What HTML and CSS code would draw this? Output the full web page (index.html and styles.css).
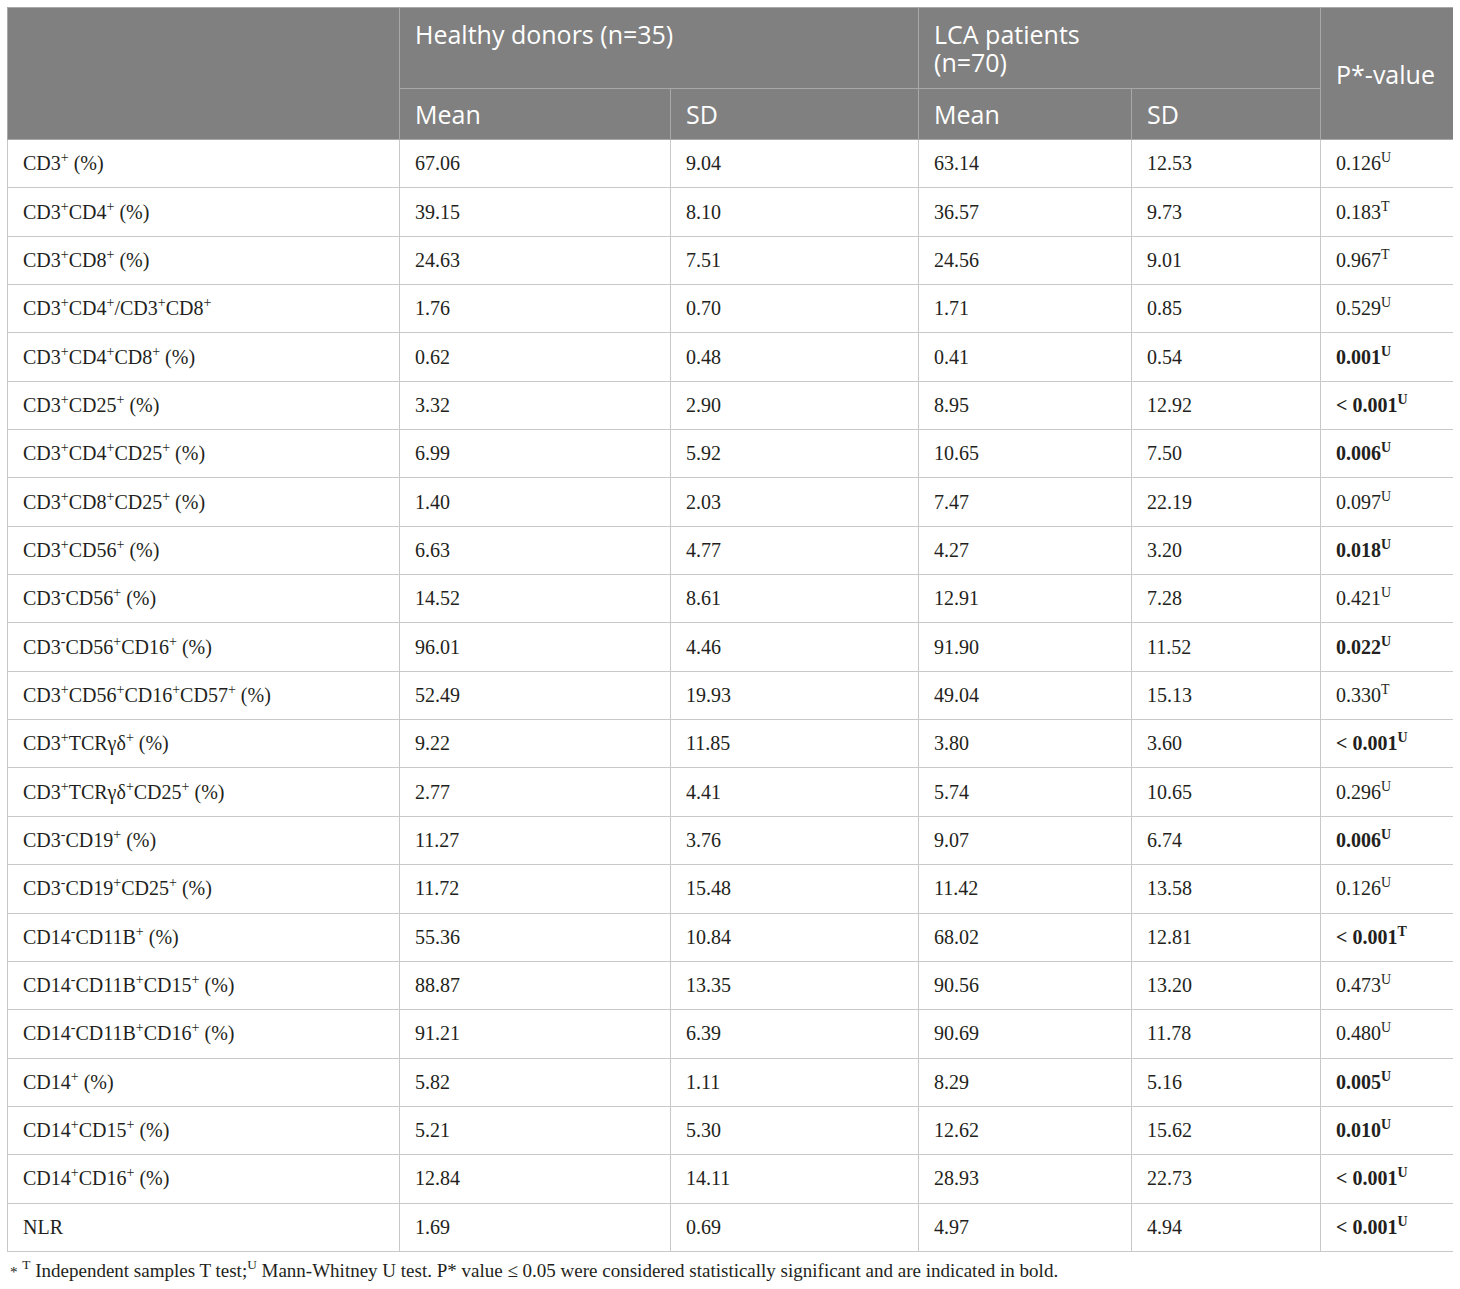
FILE: index.html
```html
<!DOCTYPE html>
<html lang="en">
<head>
  <meta charset="UTF-8" />
  <title>Immune cell subsets: healthy donors vs LCA patients</title>
  <link rel="stylesheet" href="styles.css">
</head>
<body>
  <table class="data-table">
    <colgroup>
      <col class="col-marker">
      <col class="col-hd-mean">
      <col class="col-hd-sd">
      <col class="col-lca-mean">
      <col class="col-lca-sd">
      <col class="col-p">
    </colgroup>
    <thead>
      <tr class="head-top">
        <th rowspan="2"></th>
        <th colspan="2">Healthy donors (n=35)</th>
        <th colspan="2">LCA patients<br>(n=70)</th>
        <th rowspan="2" class="p-head">P*-value</th>
      </tr>
      <tr class="head-sub">
        <th>Mean</th>
        <th>SD</th>
        <th>Mean</th>
        <th>SD</th>
      </tr>
    </thead>
    <tbody>
      <tr><td>CD3<sup>+</sup> (%)</td><td>67.06</td><td>9.04</td><td>63.14</td><td>12.53</td><td>0.126<sup>U</sup></td></tr>
      <tr><td>CD3<sup>+</sup>CD4<sup>+</sup> (%)</td><td>39.15</td><td>8.10</td><td>36.57</td><td>9.73</td><td>0.183<sup>T</sup></td></tr>
      <tr><td>CD3<sup>+</sup>CD8<sup>+</sup> (%)</td><td>24.63</td><td>7.51</td><td>24.56</td><td>9.01</td><td>0.967<sup>T</sup></td></tr>
      <tr><td>CD3<sup>+</sup>CD4<sup>+</sup>/CD3<sup>+</sup>CD8<sup>+</sup></td><td>1.76</td><td>0.70</td><td>1.71</td><td>0.85</td><td>0.529<sup>U</sup></td></tr>
      <tr><td>CD3<sup>+</sup>CD4<sup>+</sup>CD8<sup>+</sup> (%)</td><td>0.62</td><td>0.48</td><td>0.41</td><td>0.54</td><td class="sig">0.001<sup>U</sup></td></tr>
      <tr><td>CD3<sup>+</sup>CD25<sup>+</sup> (%)</td><td>3.32</td><td>2.90</td><td>8.95</td><td>12.92</td><td class="sig">&lt; 0.001<sup>U</sup></td></tr>
      <tr><td>CD3<sup>+</sup>CD4<sup>+</sup>CD25<sup>+</sup> (%)</td><td>6.99</td><td>5.92</td><td>10.65</td><td>7.50</td><td class="sig">0.006<sup>U</sup></td></tr>
      <tr><td>CD3<sup>+</sup>CD8<sup>+</sup>CD25<sup>+</sup> (%)</td><td>1.40</td><td>2.03</td><td>7.47</td><td>22.19</td><td>0.097<sup>U</sup></td></tr>
      <tr><td>CD3<sup>+</sup>CD56<sup>+</sup> (%)</td><td>6.63</td><td>4.77</td><td>4.27</td><td>3.20</td><td class="sig">0.018<sup>U</sup></td></tr>
      <tr><td>CD3<sup>-</sup>CD56<sup>+</sup> (%)</td><td>14.52</td><td>8.61</td><td>12.91</td><td>7.28</td><td>0.421<sup>U</sup></td></tr>
      <tr><td>CD3<sup>-</sup>CD56<sup>+</sup>CD16<sup>+</sup> (%)</td><td>96.01</td><td>4.46</td><td>91.90</td><td>11.52</td><td class="sig">0.022<sup>U</sup></td></tr>
      <tr><td>CD3<sup>+</sup>CD56<sup>+</sup>CD16<sup>+</sup>CD57<sup>+</sup> (%)</td><td>52.49</td><td>19.93</td><td>49.04</td><td>15.13</td><td>0.330<sup>T</sup></td></tr>
      <tr><td>CD3<sup>+</sup>TCRγδ<sup>+</sup> (%)</td><td>9.22</td><td>11.85</td><td>3.80</td><td>3.60</td><td class="sig">&lt; 0.001<sup>U</sup></td></tr>
      <tr><td>CD3<sup>+</sup>TCRγδ<sup>+</sup>CD25<sup>+</sup> (%)</td><td>2.77</td><td>4.41</td><td>5.74</td><td>10.65</td><td>0.296<sup>U</sup></td></tr>
      <tr><td>CD3<sup>-</sup>CD19<sup>+</sup> (%)</td><td>11.27</td><td>3.76</td><td>9.07</td><td>6.74</td><td class="sig">0.006<sup>U</sup></td></tr>
      <tr><td>CD3<sup>-</sup>CD19<sup>+</sup>CD25<sup>+</sup> (%)</td><td>11.72</td><td>15.48</td><td>11.42</td><td>13.58</td><td>0.126<sup>U</sup></td></tr>
      <tr><td>CD14<sup>-</sup>CD11B<sup>+</sup> (%)</td><td>55.36</td><td>10.84</td><td>68.02</td><td>12.81</td><td class="sig">&lt; 0.001<sup>T</sup></td></tr>
      <tr><td>CD14<sup>-</sup>CD11B<sup>+</sup>CD15<sup>+</sup> (%)</td><td>88.87</td><td>13.35</td><td>90.56</td><td>13.20</td><td>0.473<sup>U</sup></td></tr>
      <tr><td>CD14<sup>-</sup>CD11B<sup>+</sup>CD16<sup>+</sup> (%)</td><td>91.21</td><td>6.39</td><td>90.69</td><td>11.78</td><td>0.480<sup>U</sup></td></tr>
      <tr><td>CD14<sup>+</sup> (%)</td><td>5.82</td><td>1.11</td><td>8.29</td><td>5.16</td><td class="sig">0.005<sup>U</sup></td></tr>
      <tr><td>CD14<sup>+</sup>CD15<sup>+</sup> (%)</td><td>5.21</td><td>5.30</td><td>12.62</td><td>15.62</td><td class="sig">0.010<sup>U</sup></td></tr>
      <tr><td>CD14<sup>+</sup>CD16<sup>+</sup> (%)</td><td>12.84</td><td>14.11</td><td>28.93</td><td>22.73</td><td class="sig">&lt; 0.001<sup>U</sup></td></tr>
      <tr><td>NLR</td><td>1.69</td><td>0.69</td><td>4.97</td><td>4.94</td><td class="sig">&lt; 0.001<sup>U</sup></td></tr>
    </tbody>
  </table>

  <p class="footnote"><span class="star">*</span> <sup>T</sup> Independent samples T test;<sup>U</sup> Mann-Whitney U test. P* value ≤ 0.05 were considered statistically significant and are indicated in bold.</p>
</body>
</html>
```

FILE: styles.css
```css
body {
  margin: 7px;
  background: #fff;
  color: #231f20;
  font-family: "Liberation Serif", "Times New Roman", serif;
}

.data-table {
  width: 1447px;
  border-collapse: collapse;
  table-layout: fixed;
  border: 1px solid #c9c9c9;
}

.col-marker { width: 392px; }
.col-hd-mean { width: 271px; }
.col-hd-sd { width: 248px; }
.col-lca-mean { width: 213px; }
.col-lca-sd { width: 189px; }
.col-p { width: 133px; }

.data-table th {
  background-color: #808080;
  color: #fff;
  font-family: "Open Sans", "Noto Sans", sans-serif;
  font-weight: normal;
  font-size: 25px;
  line-height: 28px;
  text-align: left;
  padding: 0 15px;
  border: 1px solid #a8a8a8;
}

.head-top th {
  height: 81px;
  vertical-align: top;
  padding-top: 12px;
  box-sizing: border-box;
}

.head-top th.p-head {
  vertical-align: middle;
  padding-top: 0;
}

.head-sub th {
  height: 51px;
  box-sizing: border-box;
  vertical-align: middle;
}

.data-table td {
  height: 48.35px;
  box-sizing: border-box;
  padding: 0 15px;
  font-size: 20px;
  vertical-align: middle;
  border: 1px solid #c9c9c9;
  white-space: nowrap;
}

sup {
  font-size: 0.7em;
  line-height: 0;
  vertical-align: 0.6em;
}

.sig {
  font-weight: bold;
}

.footnote {
  margin: 8px 0 0 3px;
  font-size: 19px;
  color: #231f20;
}

.footnote .star {
  font-size: 0.8em;
}
```
